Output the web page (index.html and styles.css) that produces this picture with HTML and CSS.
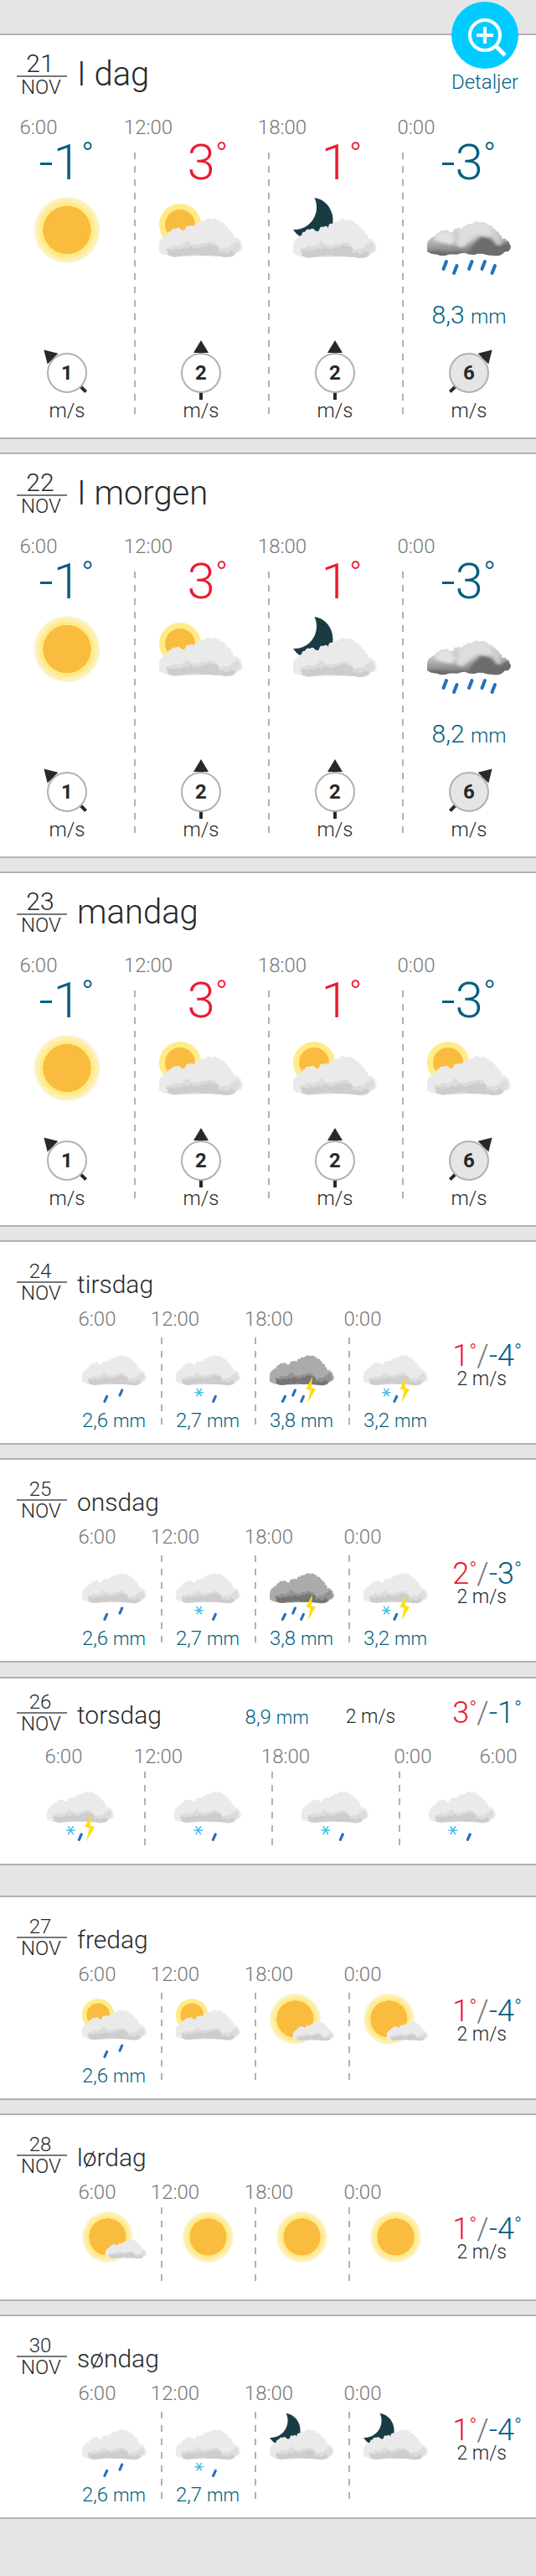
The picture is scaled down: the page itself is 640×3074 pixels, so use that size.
FILE: index.html
```html
<!DOCTYPE html>
<html lang="nb">
<head>
<meta charset="utf-8">
<meta name="viewport" content="width=device-width, initial-scale=1">
<title>Værvarsel</title>
<link rel="stylesheet" href="styles.css">
</head>
<body>
<svg class="sprite" width="0" height="0" aria-hidden="true">
  <defs>
    <path id="cloud-shape" d="M0 41V34Q0 26 4 24Q7 20 10 20Q11 15 14 16Q16 11 20 13Q24 10 26 14Q29 16 31 14Q32 8 36 10Q40 7 42 11Q42 5 47 6Q49 2 52 4Q55 3 57 1Q60 -1 63 2Q68 -1 70 3Q73 2 74 6Q78 5 79 9Q82 10 82 13Q87 14 86 18Q90 19 89 24Q94 22 95 26Q99 27 98 31Q101 33 99 38Q97 42 93 41Q90 45 87 46Q82 48 77 46Q70 46 67 44Q60 43 58 45Q50 46 45 43Q40 43 36 45Q26 44 23 46Q17 48 12 45Q5 45 0 41Z"/>
    <path id="cloud-mid" d="M8 36Q12 34 15 35Q17 30 20 33Q26 34 28 31Q31 32 31 28Q34 25 37 30Q40 33 43 31Q45 33 48 31Q53 29 56 30Q60 26 63 29Q68 28 68 32Q70 35 74 37Q79 34 82 36Q87 33 88 30Q92 32 91 28Q95 27 96 31Q99 36 93 41Q90 46 87 46Q82 48 77 46L58 45L23 46Q17 48 10 44Q12 40 8 36Z"/>
    <path id="cloud-low" d="M8 38Q14 37 18 39Q20 35 24 38Q28 37 31 35Q33 39 36 35Q38 32 41 36Q45 35 47 37Q50 33 54 34Q59 32 61 31Q65 34 69 33Q72 36 71 42Q75 38 79 42Q83 43 86 38Q89 41 91 42Q88 46 84 46Q78 48 74 46L58 45Q50 46 45 43L23 46Q17 47 10 44Q12 41 8 38Z"/>
    <radialGradient id="halo">
      <stop offset="0.72" stop-color="#fabc3f"/>
      <stop offset="0.73" stop-color="#ffea80"/>
      <stop offset="0.83" stop-color="#feec8e"/>
      <stop offset="0.85" stop-color="#fdeeaa"/>
      <stop offset="0.93" stop-color="#fdf0ba"/>
      <stop offset="1" stop-color="#fef6d6"/>
    </radialGradient>
    <linearGradient id="storm" x1="0.3" y1="0" x2="0.4" y2="1">
      <stop offset="0.2" stop-color="#dcdcdc"/>
      <stop offset="0.55" stop-color="#b8b8b8"/>
      <stop offset="0.85" stop-color="#868686"/>
      <stop offset="1" stop-color="#686868"/>
    </linearGradient>
    <filter id="soft" x="-10%" y="-10%" width="120%" height="120%"><feGaussianBlur stdDeviation="2"/></filter>
    <clipPath id="cloud-clip"><use href="#cloud-shape"/></clipPath>
    <g id="cloud">
      <use href="#cloud-shape" fill="#eaeaea"/>
      <use href="#cloud-mid" fill="#dcdcdc"/>
      <use href="#cloud-low" fill="#cdcdcd"/>
    </g>
    <g id="cloud-dark">
      <use href="#cloud-shape" fill="#ababab"/>
      <use href="#cloud-mid" fill="#929292"/>
      <use href="#cloud-low" fill="#757575"/>
    </g>
    <g id="cloud-storm">
      <use href="#cloud-shape" fill="url(#storm)"/>
      <g clip-path="url(#cloud-clip)"><g filter="url(#soft)">
        <path d="M46 49L54 32L64 21L76 24L86 34L96 27L104 32L98 48Z" fill="#6c6c6c"/>
        <path d="M-2 42L10 40L28 43L46 42L44 50L0 50Z" fill="#6c6c6c"/>
        <path d="M8 24L14 15L28 14L34 24L30 32L14 28Z" fill="#e2e2e2"/>
        <path d="M34 32L38 14L46 7L60 3L72 7L82 20L74 20L60 18L50 28L42 36Z" fill="#dedede"/>
        <path d="M77 10L85 17L88 32L83 32L77 20Z" fill="#cfcfcf"/>
      </g></g>
    </g>
    <g id="sun-disc">
      <circle cx="39.5" cy="39.5" r="39.5" fill="url(#halo)"/>
      <circle cx="39.5" cy="39.5" r="28" fill="#fabc3f"/>
    </g>
    <path id="bolt" d="M66.500 59L56.500 78.500L63 80.500L59 100L71.500 79L64.500 76.500Z" fill="#ffde17"/>
    <g id="flake" stroke="#47c1e8" stroke-width="2" stroke-linecap="round">
      <path d="M-6 0H6M-3.500 -5.500L3.500 5.500M3.500 -5.500L-3.500 5.500"/>
    </g>
    <g id="arrow">
      <path d="M0 -39L9 -24H2V32H-2V-24H-9Z" fill="#25292a"/>
    </g>
  </defs>
  <symbol id="sun" viewBox="0 0 100 100"><use href="#sun-disc" x="10.500"/></symbol>
  <symbol id="sun-behind" viewBox="0 0 100 100">
    <circle cx="25" cy="33" r="25" fill="#ffec86"/><circle cx="25" cy="33" r="18" fill="#fabc3f"/>
    <use href="#cloud" y="25"/>
  </symbol>
  <symbol id="sun-front" viewBox="0 0 100 100">
    <use href="#sun-disc"/>
    <use href="#cloud" transform="translate(36 43) scale(.64)"/>
  </symbol>
  <symbol id="sun-rain" viewBox="0 0 100 100">
    <use href="#sun-behind" width="100" height="100"/>
    <path class="drops" d="M38.500 90L35 98M62 80.500L58.500 88.500"/>
  </symbol>
  <symbol id="moon" viewBox="0 0 100 100">
    <path d="M25.500 1C39 3 48 15 47.500 29C47 39 40 47 30 50L9 48Q4 45 0 39C20 40 34 20 25.500 1Z" fill="#193c44"/>
    <use href="#cloud" y="26"/>
  </symbol>
  <symbol id="heavy-rain" viewBox="0 0 100 100">
    <use href="#cloud-storm" transform="translate(0 29) scale(1 .88)"/>
    <path class="drops" d="M23 77L19.500 86M35.500 82L32 91M53.500 77L50 86M69 77L65.500 86M81 82L77.500 91"/>
  </symbol>
  <symbol id="rain" viewBox="0 0 100 100">
    <use href="#cloud" y="26"/><path class="drops" d="M38.500 90L35 98M62 80.500L58.500 88.500"/>
  </symbol>
  <symbol id="sleet" viewBox="0 0 100 100">
    <use href="#cloud" y="26"/><use href="#flake" x="36" y="84"/><path class="drops" d="M61.500 90L58 98"/>
  </symbol>
  <symbol id="rain-thunder" viewBox="0 0 100 100">
    <use href="#cloud-dark" y="26"/><path class="drops" d="M24 90L20 98M39.500 80.500L36 88.500M52.500 90L49 98"/><use href="#bolt"/>
  </symbol>
  <symbol id="sleet-thunder" viewBox="0 0 100 100">
    <use href="#cloud" y="26"/><use href="#flake" x="35.500" y="84"/><path class="drops" d="M51.500 90L48 98"/><use href="#bolt"/>
  </symbol>
  <symbol id="wind-nw" viewBox="-40 -39 80 72"><use href="#arrow" transform="rotate(-45)"/><circle r="23" fill="#fff" stroke="#b1b1b1" stroke-width="2"/></symbol>
  <symbol id="wind-n" viewBox="-40 -39 80 72"><use href="#arrow"/><circle r="23" fill="#fff" stroke="#b1b1b1" stroke-width="2"/></symbol>
  <symbol id="wind-ne" viewBox="-40 -39 80 72"><use href="#arrow" transform="rotate(45)"/><circle r="23" fill="#e5e5e5" stroke="#b1b1b1" stroke-width="2"/></symbol>
</svg>

<main class="forecast">
  <section class="day large">
    <button class="details" type="button">
      <svg viewBox="0 0 80 80" aria-hidden="true"><circle cx="40" cy="40" r="40" fill="#0cf"/><g fill="none" stroke="#fff" stroke-width="4"><circle cx="40" cy="40" r="18"/><path d="M30 40H50M40 30V50"/><path d="M53 53L64 64" stroke-width="5"/></g></svg>
      <span>Detaljer</span>
    </button>
    <header class="head"><div class="date"><span class="num">21</span><span class="month">NOV</span></div><h2>I dag</h2></header>
    <div class="hours"><span>6:00</span><span>12:00</span><span>18:00</span><span>0:00</span></div>
    <div class="cells">
      <div class="cell"><div class="temp cold">-1<sup>°</sup></div><svg class="icon"><use href="#sun"/></svg><div class="precip"></div><div class="wind"><svg><use href="#wind-nw"/></svg><b>1</b></div><div class="unit">m/s</div></div>
      <div class="cell"><div class="temp warm">3<sup>°</sup></div><svg class="icon"><use href="#sun-behind"/></svg><div class="precip"></div><div class="wind"><svg><use href="#wind-n"/></svg><b>2</b></div><div class="unit">m/s</div></div>
      <div class="cell"><div class="temp warm">1<sup>°</sup></div><svg class="icon"><use href="#moon"/></svg><div class="precip"></div><div class="wind"><svg><use href="#wind-n"/></svg><b>2</b></div><div class="unit">m/s</div></div>
      <div class="cell"><div class="temp cold">-3<sup>°</sup></div><svg class="icon"><use href="#heavy-rain"/></svg><div class="precip">8,3 <small>mm</small></div><div class="wind"><svg><use href="#wind-ne"/></svg><b>6</b></div><div class="unit">m/s</div></div>
    </div>
  </section>

  <section class="day large">
    <header class="head"><div class="date"><span class="num">22</span><span class="month">NOV</span></div><h2>I morgen</h2></header>
    <div class="hours"><span>6:00</span><span>12:00</span><span>18:00</span><span>0:00</span></div>
    <div class="cells">
      <div class="cell"><div class="temp cold">-1<sup>°</sup></div><svg class="icon"><use href="#sun"/></svg><div class="precip"></div><div class="wind"><svg><use href="#wind-nw"/></svg><b>1</b></div><div class="unit">m/s</div></div>
      <div class="cell"><div class="temp warm">3<sup>°</sup></div><svg class="icon"><use href="#sun-behind"/></svg><div class="precip"></div><div class="wind"><svg><use href="#wind-n"/></svg><b>2</b></div><div class="unit">m/s</div></div>
      <div class="cell"><div class="temp warm">1<sup>°</sup></div><svg class="icon"><use href="#moon"/></svg><div class="precip"></div><div class="wind"><svg><use href="#wind-n"/></svg><b>2</b></div><div class="unit">m/s</div></div>
      <div class="cell"><div class="temp cold">-3<sup>°</sup></div><svg class="icon"><use href="#heavy-rain"/></svg><div class="precip">8,2 <small>mm</small></div><div class="wind"><svg><use href="#wind-ne"/></svg><b>6</b></div><div class="unit">m/s</div></div>
    </div>
  </section>

  <section class="day large">
    <header class="head"><div class="date"><span class="num">23</span><span class="month">NOV</span></div><h2>mandag</h2></header>
    <div class="hours"><span>6:00</span><span>12:00</span><span>18:00</span><span>0:00</span></div>
    <div class="cells">
      <div class="cell"><div class="temp cold">-1<sup>°</sup></div><svg class="icon"><use href="#sun"/></svg><div class="wind"><svg><use href="#wind-nw"/></svg><b>1</b></div><div class="unit">m/s</div></div>
      <div class="cell"><div class="temp warm">3<sup>°</sup></div><svg class="icon"><use href="#sun-behind"/></svg><div class="wind"><svg><use href="#wind-n"/></svg><b>2</b></div><div class="unit">m/s</div></div>
      <div class="cell"><div class="temp warm">1<sup>°</sup></div><svg class="icon"><use href="#sun-behind"/></svg><div class="wind"><svg><use href="#wind-n"/></svg><b>2</b></div><div class="unit">m/s</div></div>
      <div class="cell"><div class="temp cold">-3<sup>°</sup></div><svg class="icon"><use href="#sun-behind"/></svg><div class="wind"><svg><use href="#wind-ne"/></svg><b>6</b></div><div class="unit">m/s</div></div>
    </div>
  </section>

  <section class="day small">
    <header class="head"><div class="date"><span class="num">24</span><span class="month">NOV</span></div><h2>tirsdag</h2></header>
    <div class="hours"><span>6:00</span><span>12:00</span><span>18:00</span><span>0:00</span></div>
    <div class="cells">
      <div class="cell"><svg class="icon"><use href="#rain"/></svg><div class="precip">2,6 <small>mm</small></div></div>
      <div class="cell"><svg class="icon"><use href="#sleet"/></svg><div class="precip">2,7 <small>mm</small></div></div>
      <div class="cell"><svg class="icon"><use href="#rain-thunder"/></svg><div class="precip">3,8 <small>mm</small></div></div>
      <div class="cell"><svg class="icon"><use href="#sleet-thunder"/></svg><div class="precip">3,2 <small>mm</small></div></div>
      <div class="summary"><div class="range"><span class="warm">1<sup>°</sup></span>/<span class="cold">-4<sup>°</sup></span></div><div class="speed">2 m/s</div></div>
    </div>
  </section>

  <section class="day small">
    <header class="head"><div class="date"><span class="num">25</span><span class="month">NOV</span></div><h2>onsdag</h2></header>
    <div class="hours"><span>6:00</span><span>12:00</span><span>18:00</span><span>0:00</span></div>
    <div class="cells">
      <div class="cell"><svg class="icon"><use href="#rain"/></svg><div class="precip">2,6 <small>mm</small></div></div>
      <div class="cell"><svg class="icon"><use href="#sleet"/></svg><div class="precip">2,7 <small>mm</small></div></div>
      <div class="cell"><svg class="icon"><use href="#rain-thunder"/></svg><div class="precip">3,8 <small>mm</small></div></div>
      <div class="cell"><svg class="icon"><use href="#sleet-thunder"/></svg><div class="precip">3,2 <small>mm</small></div></div>
      <div class="summary"><div class="range"><span class="warm">2<sup>°</sup></span>/<span class="cold">-3<sup>°</sup></span></div><div class="speed">2 m/s</div></div>
    </div>
  </section>

  <section class="day wide">
    <header class="head"><div class="date"><span class="num">26</span><span class="month">NOV</span></div><h2>torsdag</h2>
      <div class="precip">8,9 <small>mm</small></div><div class="speed">2 m/s</div><div class="range"><span class="warm">3<sup>°</sup></span>/<span class="cold">-1<sup>°</sup></span></div>
    </header>
    <div class="hours"><span>6:00</span><span>12:00</span><span>18:00</span><span>0:00</span><span>6:00</span></div>
    <div class="cells">
      <div class="cell"><svg class="icon"><use href="#sleet-thunder"/></svg></div>
      <div class="cell"><svg class="icon"><use href="#sleet"/></svg></div>
      <div class="cell"><svg class="icon"><use href="#sleet"/></svg></div>
      <div class="cell"><svg class="icon"><use href="#sleet"/></svg></div>
    </div>
  </section>

  <section class="day small new-week">
    <header class="head"><div class="date"><span class="num">27</span><span class="month">NOV</span></div><h2>fredag</h2></header>
    <div class="hours"><span>6:00</span><span>12:00</span><span>18:00</span><span>0:00</span></div>
    <div class="cells">
      <div class="cell"><svg class="icon"><use href="#sun-rain"/></svg><div class="precip">2,6 <small>mm</small></div></div>
      <div class="cell"><svg class="icon"><use href="#sun-behind"/></svg></div>
      <div class="cell"><svg class="icon"><use href="#sun-front"/></svg></div>
      <div class="cell"><svg class="icon"><use href="#sun-front"/></svg></div>
      <div class="summary"><div class="range"><span class="warm">1<sup>°</sup></span>/<span class="cold">-4<sup>°</sup></span></div><div class="speed">2 m/s</div></div>
    </div>
  </section>

  <section class="day small dry">
    <header class="head"><div class="date"><span class="num">28</span><span class="month">NOV</span></div><h2>lørdag</h2></header>
    <div class="hours"><span>6:00</span><span>12:00</span><span>18:00</span><span>0:00</span></div>
    <div class="cells">
      <div class="cell"><svg class="icon"><use href="#sun-front"/></svg></div>
      <div class="cell"><svg class="icon"><use href="#sun"/></svg></div>
      <div class="cell"><svg class="icon"><use href="#sun"/></svg></div>
      <div class="cell"><svg class="icon"><use href="#sun"/></svg></div>
      <div class="summary"><div class="range"><span class="warm">1<sup>°</sup></span>/<span class="cold">-4<sup>°</sup></span></div><div class="speed">2 m/s</div></div>
    </div>
  </section>

  <section class="day small">
    <header class="head"><div class="date"><span class="num">30</span><span class="month">NOV</span></div><h2>søndag</h2></header>
    <div class="hours"><span>6:00</span><span>12:00</span><span>18:00</span><span>0:00</span></div>
    <div class="cells">
      <div class="cell"><svg class="icon"><use href="#rain"/></svg><div class="precip">2,6 <small>mm</small></div></div>
      <div class="cell"><svg class="icon"><use href="#sleet"/></svg><div class="precip">2,7 <small>mm</small></div></div>
      <div class="cell"><svg class="icon"><use href="#moon"/></svg></div>
      <div class="cell"><svg class="icon"><use href="#moon"/></svg></div>
      <div class="summary"><div class="range"><span class="warm">1<sup>°</sup></span>/<span class="cold">-4<sup>°</sup></span></div><div class="speed">2 m/s</div></div>
    </div>
  </section>
</main>
</body>
</html>
```

FILE: styles.css
```css
* { box-sizing: border-box; }

body {
  margin: 0;
  background: #e5e5e5;
  color: #25292a;
  font: 300 24px/24px Roboto, "Liberation Sans", sans-serif;
}

.sprite { position: absolute; }
.drops {
  fill: none;
  stroke: #2470bd;
  stroke-width: 4px;
  stroke-linecap: round;
}

.forecast {
  display: flex;
  flex-direction: column;
  gap: 16px;
  padding: 40px 0 69px;
}

.day {
  position: relative;
  background: #fff;
  border-top: 2px solid #b1b1b1;
  border-bottom: 2px solid #b1b1b1;
}

.large { padding: 20px 0; }
.small { padding: 23px 0 15px; }
.wide { margin-top: 1px; padding: 16px 0 22px; }
.dry { padding-bottom: 22px; }
.new-week { margin-top: 20px; }

/* Header */
.head {
  display: flex;
  align-items: flex-end;
  gap: 12px;
  padding: 0 17px 0 20px;
}
.large .head { align-items: center; }

.date {
  display: flex;
  flex-direction: column;
  width: 60px;
  text-align: center;
}
.num { border-bottom: 2px solid #777; padding-right: 4px; }
.large .num { font-size: 30px; line-height: 28px; }
.month { padding-right: 2px; }

h2 {
  margin: 0;
  font-size: 30px;
  font-weight: 300;
  line-height: 44px;
}
.large h2 { font-size: 40px; line-height: 40px; }

.speed { font-size: 23px; }
.wide h2 { flex: 1; }
.wide .head .precip, .wide .speed { line-height: 40px; }
.wide .speed { margin: 0 56px 0 32px; }
.wide .range { line-height: 50px; }

.details {
  position: absolute;
  top: -42px;
  right: 16px;
  display: flex;
  flex-direction: column;
  align-items: center;
  gap: 4px;
  width: 90px;
  padding: 2px 0 0;
  border: 0;
  background: none;
  color: #005f7f;
  font: inherit;
  cursor: pointer;
}
.details svg { width: 80px; height: 80px; }

/* Hour labels */
.hours { display: grid; color: #777; }
.hours span { width: 76px; margin-left: -21px; text-align: center; }
.large .hours { grid-template-columns: repeat(4, 1fr); margin-top: 24px; }
.large .hours span:first-child { margin-left: 8px; }
.small .hours { grid-template-columns: repeat(5, 1fr); margin-top: 7px; padding-left: 80px; }
.small .hours span:first-child { margin-left: -2px; }
.wide .hours { grid-template-columns: repeat(4, 1fr); margin: 15px 12px 0 20px; }
.wide .hours span { grid-row: 1; }
.wide .hours span:first-child { grid-column: 1; margin-left: 18px; }
.wide .hours span:nth-child(2) { grid-column: 2; }
.wide .hours span:nth-child(3) { grid-column: 3; }
.wide .hours span:nth-child(4) { grid-column: 4; }
.wide .hours span:last-child { grid-column: 4; justify-self: end; margin: 0 -5px 0 0; }

/* Period cells */
.cells { display: grid; }
.large .cells { grid-template-columns: repeat(4, 1fr); }
.small .cells { grid-template-columns: repeat(5, 1fr); margin-top: 10px; padding-left: 80px; }
.wide .cells { grid-template-columns: repeat(4, 1fr); margin: 6px 12px 0 20px; }
.dry .cells { margin-top: 6px; }

.cell {
  display: flex;
  flex-direction: column;
  align-items: center;
}
.cell + .cell {
  background: repeating-linear-gradient(to bottom, #b1b1b1 0 8px, transparent 8px 16px) no-repeat;
  background-size: 2px calc(100% - 7px);
}
.large .cell + .cell {
  background-position: 0 18px;
  background-size: 2px calc(100% - 26px);
}
.wide .cell, .dry .cell { min-height: 88px; }
.wide .cell + .cell, .dry .cell + .cell { background-size: 2px 100%; }

.icon { width: 77px; height: 77px; margin-top: 1px; }
.large .icon { width: 100px; height: 100px; margin-top: 11px; }
.wide .icon { width: 80px; height: 80px; margin-top: 3px; }
.dry .icon { margin-top: 5px; }

.temp {
  align-self: flex-end;
  padding-right: 48px;
  font-size: 60px;
  line-height: 60px;
}
sup { font-size: 40px; line-height: 0; vertical-align: 15px; }

.precip { color: #005f7f; white-space: nowrap; }
.precip small { font-size: 22px; line-height: 0; }
.small .precip { margin-top: 9px; }
.large .precip { height: 60px; padding-top: 25px; font-size: 30px; line-height: 32px; }
.large .precip small { font-size: 24px; }

.wind {
  display: grid;
  place-items: center;
  margin-top: 11px;
}
.wind svg, .wind b { grid-area: 1 / 1; }
.wind svg { width: 80px; height: 72px; }
.wind b { padding-top: 6px; font-weight: 700; }

.range { color: #777; font-size: 36px; line-height: 32px; white-space: nowrap; }
.range sup { font-size: 24px; vertical-align: 9px; }
.summary { padding: 6px 17px 0 0; text-align: right; }
.summary .speed { padding-right: 18px; }
.dry .summary { padding-top: 10px; }

.cold { color: #005f7f; }
.warm { color: #ea1a30; }
```
